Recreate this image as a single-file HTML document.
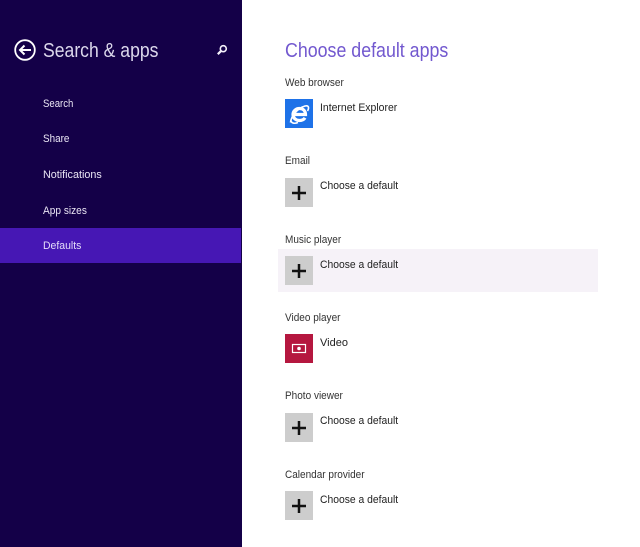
<!DOCTYPE html>
<html><head><meta charset="utf-8"><style>
html,body{margin:0;padding:0}
body{width:640px;height:547px;overflow:hidden;background:#fff;position:relative;font-family:"Liberation Sans",sans-serif}
div,svg{position:absolute}
.side{left:0;top:0;width:242px;height:547px;background:#140048}
.sel{left:0;top:228px;width:241px;height:35px;background:#4617b4}
.nav,.lab,.txt,.h{transform-origin:0 50%;white-space:nowrap}
.nav{left:43px;color:#ebe6f5;font-size:11px;line-height:14px}
.lab{left:285px;color:#333;font-size:11px;line-height:14px;transform:scaleX(.91)}
.txt{left:320px;color:#222;font-size:11px;line-height:14px;transform:scaleX(.94)}
.h{font-size:20px;line-height:25px}
.ic{left:285px;width:28px;height:29px;background:#cdcdcd}
.ic svg{left:0;top:0}
</style></head><body>
<div class="side"></div>
<div class="sel"></div>
<svg style="left:13px;top:38px" width="24" height="24" viewBox="0 0 24 24" fill="none" stroke="#fff"><circle cx="12" cy="12" r="9.800" stroke-width="1.800"/><path d="M18 12H7M11.500 7.500L7 12l4.500 4.500" stroke-width="2"/></svg>
<div class="h" style="left:43px;top:39px;color:#dcd8ec;transform:scaleX(.88)">Search &amp; apps</div>
<svg style="left:215px;top:43px" width="14" height="14" viewBox="0 0 14 14" fill="none" stroke="#f4f0fa"><circle cx="8.300" cy="5.700" r="3" stroke-width="1.600"/><path d="M6.200 7.800L2.800 11.200" stroke-width="2.200"/></svg>
<div class="nav" style="top:97px;transform:scaleX(.87)">Search</div>
<div class="nav" style="top:132px;transform:scaleX(.9)">Share</div>
<div class="nav" style="top:168px;transform:scaleX(.98)">Notifications</div>
<div class="nav" style="top:204px;transform:scaleX(.92)">App sizes</div>
<div class="nav" style="top:239px;color:#e4dcfa;transform:scaleX(.95)">Defaults</div>

<div class="h" style="left:285px;top:39px;color:#7258cf;transform:scaleX(.89)">Choose default apps</div>

<div class="lab" style="top:76px">Web browser</div>
<div class="ic" style="top:99px;background:#1e72e8"><svg width="28" height="29" viewBox="0 0 28 29" fill="none"><path d="M9.500 15.500H20.500C20.500 11.500 17.800 9.500 14.500 9.500C10.800 9.500 8 12.200 8 15.500C8 19 10.800 21.500 14.500 21.500C17 21.500 19 20.500 20 18.800" stroke="#fff" stroke-width="3.200"/><path d="M5.500 23.500C6 17 13 9 20 7C23.500 6 24.500 8.500 22.500 12" stroke="#fff" stroke-width="1.600"/><path d="M6 21.500C6.500 25 10.500 24.500 13 23.500" stroke="#fff" stroke-width="1.600"/></svg></div>
<div class="txt" style="top:101px;transform:scaleX(.95)">Internet Explorer</div>

<div class="lab" style="top:154px">Email</div>
<div class="ic" style="top:178px"><svg width="28" height="29" viewBox="0 0 28 29"><path d="M14 8v14M7 15h14" stroke="#111" stroke-width="2.500"/></svg></div>
<div class="txt" style="top:179px">Choose a default</div>

<div class="lab" style="top:233px">Music player</div>
<div style="left:278px;top:249px;width:320px;height:43px;background:#f6f2f8"></div>
<div class="ic" style="top:256px"><svg width="28" height="29" viewBox="0 0 28 29"><path d="M14 8v14M7 15h14" stroke="#111" stroke-width="2.500"/></svg></div>
<div class="txt" style="top:258px">Choose a default</div>

<div class="lab" style="top:311px">Video player</div>
<div class="ic" style="top:334px;background:#b5173f"><svg width="28" height="29" viewBox="0 0 28 29" fill="none"><rect x="7.500" y="10.500" width="13" height="8" stroke="#fff" stroke-width="1.200"/><circle cx="14" cy="14.500" r="1.800" fill="#fff"/></svg></div>
<div class="txt" style="top:336px;transform:none">Video</div>

<div class="lab" style="top:389px">Photo viewer</div>
<div class="ic" style="top:413px"><svg width="28" height="29" viewBox="0 0 28 29"><path d="M14 8v14M7 15h14" stroke="#111" stroke-width="2.500"/></svg></div>
<div class="txt" style="top:414px">Choose a default</div>

<div class="lab" style="top:468px">Calendar provider</div>
<div class="ic" style="top:491px"><svg width="28" height="29" viewBox="0 0 28 29"><path d="M14 8v14M7 15h14" stroke="#111" stroke-width="2.500"/></svg></div>
<div class="txt" style="top:493px">Choose a default</div>
</body></html>
